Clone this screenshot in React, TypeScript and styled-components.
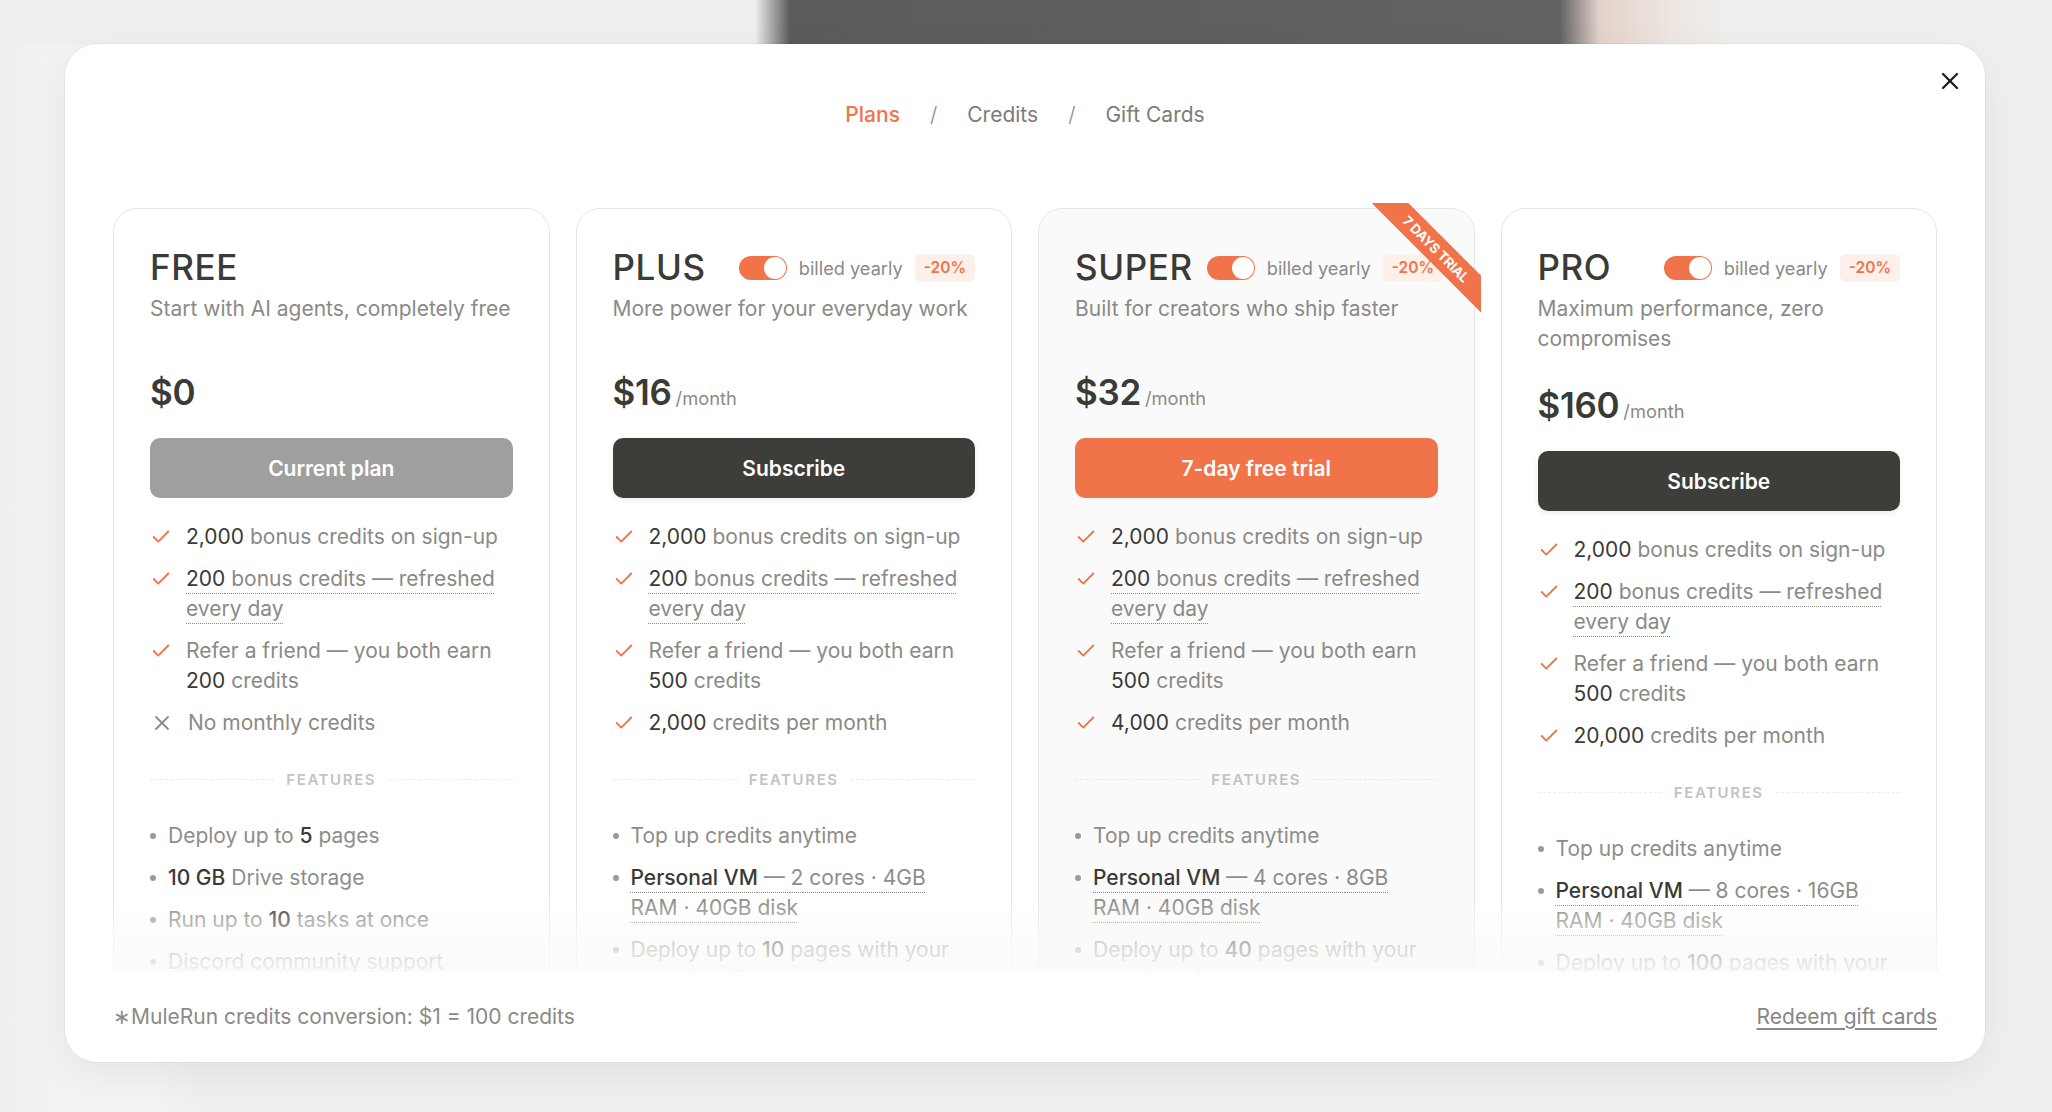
import React from 'react';
import styled, { createGlobalStyle, css } from 'styled-components';
import { Check, X } from 'lucide-react';

const ORANGE = '#f0734a';
const DARK = '#3a3a37';
const GRAY = '#8a8a87';

const GlobalStyle = createGlobalStyle`
  html, body { margin: 0; padding: 0; }
  body {
    width: 2052px;
    height: 1112px;
    overflow: hidden;
    font-family: Inter, "Noto Sans", "Liberation Sans", sans-serif;
    -webkit-font-smoothing: antialiased;
    background:
      linear-gradient(90deg, rgba(239,239,237,1) 0px, rgba(239,239,237,1) 755px, #5b5b5b 790px, #636363 1560px, #e4d3cb 1600px, #eee8e4 1680px, rgba(239,239,237,1) 1730px) 0 0 / 2052px 44px no-repeat,
      linear-gradient(90deg, #efefed 0px, #f3f3f1 70px, #f3f3f1 150px, #efefed 200px) 0 0 / 2052px 1112px no-repeat,
      #efefed;
  }
  * { box-sizing: border-box; }
`;

const Page = styled.div`
  height: 1112px;
  padding: 44px 0 0 65px;
`;

const Modal = styled.div`
  position: relative;
  width: 1920px;
  height: 1018px;
  background: #ffffff;
  border-radius: 32px;
  box-shadow: 0 0 0 1px rgba(0, 0, 0, 0.035), 0 12px 40px rgba(0, 0, 0, 0.06);
  display: flex;
  flex-direction: column;
  padding: 56px 48px 30px;
`;

const CloseButton = styled.button`
  position: absolute;
  top: 23px;
  right: 21px;
  width: 28px;
  height: 28px;
  padding: 0;
  border: none;
  background: transparent;
  color: #1f1f1f;
  display: flex;
  align-items: center;
  justify-content: center;
  cursor: pointer;
`;

const Tabs = styled.nav`
  display: flex;
  justify-content: center;
  align-items: center;
  gap: 30px;
  height: 30px;
  font-size: 21px;
  line-height: 30px;
`;

const Tab = styled.span<{ $active?: boolean }>`
  color: ${(p) => (p.$active ? ORANGE : '#7c7c79')};
  font-weight: ${(p) => (p.$active ? 500 : 400)};
`;

const Slash = styled.span`
  color: #8d8d8a;
  font-weight: 300;
`;

const ScrollArea = styled.div`
  position: relative;
  margin-top: 70px;
  flex: 1;
  overflow: hidden;
  padding-top: 8px;
`;

const Fade = styled.div`
  position: absolute;
  left: 0;
  right: 0;
  bottom: 0;
  height: 72px;
  pointer-events: none;
  background: linear-gradient(to bottom, rgba(250, 250, 249, 0) 0%, rgba(250, 250, 249, 0.55) 45%, rgba(250, 250, 249, 0.9) 100%);
`;

const Grid = styled.div`
  display: grid;
  grid-template-columns: repeat(4, minmax(0, 1fr));
  gap: 26px;
  align-items: stretch;
`;

const Card = styled.section<{ $tinted?: boolean }>`
  position: relative;
  min-width: 0;
  border: 1px solid #e6e6e4;
  border-radius: 24px;
  background: ${(p) => (p.$tinted ? '#fafafa' : '#ffffff')};
  padding: 38px 36px 48px;
  display: flex;
  flex-direction: column;
`;

const RibbonClip = styled.div`
  position: absolute;
  top: -6px;
  right: -7px;
  width: 120px;
  height: 120px;
  overflow: hidden;
  pointer-events: none;
`;

const Ribbon = styled.div`
  position: absolute;
  left: -5px;
  top: 33px;
  width: 160px;
  height: 26px;
  transform: rotate(45deg);
  background: ${ORANGE};
  color: #ffffff;
  font-size: 13.5px;
  font-weight: 700;
  letter-spacing: -0.3px;
  line-height: 26px;
  text-align: center;
  text-transform: uppercase;
`;

const TitleRow = styled.div`
  display: flex;
  align-items: center;
  justify-content: space-between;
  gap: 14px;
  height: 41px;
`;

const PlanName = styled.h2`
  margin: 0;
  font-size: 35px;
  line-height: 41px;
  font-weight: 500;
  letter-spacing: 0.6px;
  color: ${DARK};
  white-space: nowrap;
`;

const Billing = styled.div`
  display: flex;
  align-items: center;
  gap: 12px;
  flex-shrink: 0;
`;

const Toggle = styled.span`
  position: relative;
  width: 48px;
  height: 24px;
  border-radius: 12px;
  background: ${ORANGE};
  display: flex;
  align-items: center;
  justify-content: flex-end;
  padding: 1px;
`;

const Knob = styled.span`
  width: 22px;
  height: 22px;
  border-radius: 50%;
  background: #ffffff;
`;

const BilledText = styled.span`
  font-size: 18.2px;
  color: ${GRAY};
  white-space: nowrap;
`;

const Badge = styled.span`
  height: 28px;
  padding: 0 9px;
  border-radius: 6px;
  background: #fdefe9;
  color: ${ORANGE};
  font-size: 15.5px;
  font-weight: 600;
  display: flex;
  align-items: center;
`;

const Description = styled.p`
  margin: 6px 0 0;
  min-height: 47px;
  font-size: 21px;
  line-height: 30px;
  color: ${GRAY};
`;

const PriceRow = styled.div`
  margin-top: 29px;
  display: flex;
  align-items: baseline;
  gap: 4px;
  height: 44px;
`;

const Price = styled.span`
  font-size: 35px;
  line-height: 44px;
  font-weight: 600;
  color: ${DARK};
  letter-spacing: -0.3px;
`;

const Per = styled.span`
  font-size: 18.3px;
  color: ${GRAY};
`;

type Variant = 'muted' | 'dark' | 'accent';

const buttonColors: Record<Variant, string> = {
  muted: '#9f9f9e',
  dark: '#3d3d3a',
  accent: ORANGE,
};

const ActionButton = styled.button<{ $variant: Variant }>`
  margin-top: 24px;
  height: 60px;
  width: 100%;
  border: none;
  border-radius: 10px;
  background: ${(p) => buttonColors[p.$variant]};
  color: #ffffff;
  font-family: inherit;
  font-size: 21px;
  font-weight: 600;
  cursor: pointer;
  ${(p) =>
    p.$variant === 'dark' &&
    css`
      box-shadow: 0 2px 6px rgba(0, 0, 0, 0.08);
    `}
`;

const List = styled.ul<{ $pad?: number }>`
  list-style: none;
  margin: 0;
  padding: 0 ${(p) => p.$pad ?? 0}px 0 0;
  display: flex;
  flex-direction: column;
  gap: 12px;
`;

const CreditList = styled(List)`
  margin-top: 24px;
`;

const FeatureList = styled(List)`
  margin-top: 32px;
`;

const CreditItem = styled.li`
  display: flex;
  gap: 14px;
  font-size: 21px;
  line-height: 30px;
  color: ${GRAY};
`;

const IconBox = styled.span<{ $muted?: boolean }>`
  flex: 0 0 22px;
  height: 30px;
  display: flex;
  align-items: center;
  justify-content: center;
  color: ${(p) => (p.$muted ? '#8a8a87' : ORANGE)};
`;

const FeatureItem = styled.li`
  display: flex;
  gap: 12px;
  font-size: 21px;
  line-height: 30px;
  color: #8d8d8a;
`;

const Bullet = styled.span`
  flex: 0 0 6px;
  height: 30px;
  display: flex;
  align-items: center;
  &::before {
    content: '';
    width: 6px;
    height: 6px;
    border-radius: 50%;
    background: #9a9a97;
  }
`;

const Num = styled.span`
  color: ${DARK};
`;

const Strong = styled.span`
  color: ${DARK};
  font-weight: 500;
`;

const Dotted = styled.span`
  text-decoration: underline dotted #8a8a87;
  text-decoration-thickness: 1px;
  text-underline-offset: 7px;
`;

const Divider = styled.div`
  margin-top: 31px;
  height: 20px;
  display: flex;
  align-items: center;
  gap: 12px;
  &::before,
  &::after {
    content: '';
    flex: 1;
    border-top: 1px dashed #ebebe9;
  }
`;

const DividerLabel = styled.span`
  font-size: 15px;
  font-weight: 600;
  letter-spacing: 1.6px;
  color: #c3c3c1;
`;

const Footer = styled.footer`
  margin-top: 30px;
  height: 30px;
  display: flex;
  align-items: center;
  justify-content: space-between;
  font-size: 21px;
  line-height: 30px;
  color: ${GRAY};
`;

const RedeemLink = styled.a`
  color: #878784;
  text-decoration: underline;
  text-decoration-thickness: 1.5px;
  text-underline-offset: 4px;
  cursor: pointer;
`;

type Plan = {
  name: string;
  desc: string;
  price: string;
  per?: string;
  billing: boolean;
  ribbon?: string;
  tinted?: boolean;
  button: { label: string; variant: Variant };
  credits: { ok: boolean; content: React.ReactNode }[];
  features: React.ReactNode[];
};

const commonCredits = (refer: string, monthly: string | null) => [
  { ok: true, content: <><Num>2,000</Num> bonus credits on sign-up</> },
  { ok: true, content: <Dotted><Num>200</Num> bonus credits — refreshed every day</Dotted> },
  { ok: true, content: <>Refer a friend — you both earn <Num>{refer}</Num> credits</> },
  monthly
    ? { ok: true, content: <><Num>{monthly}</Num> credits per month</> }
    : { ok: false, content: <>No monthly credits</> },
];

const paidFeatures = (cores: string, ram: string, pages: string, storage: string) => [
  <>Top up credits anytime</>,
  <Dotted><Strong>Personal VM</Strong> — {cores} cores · {ram} RAM · 40GB disk</Dotted>,
  <>Deploy up to <Strong>{pages}</Strong> pages with your own domain</>,
  <><Strong>{storage}</Strong> Drive storage</>,
  <>Priority support</>,
];

const plans: Plan[] = [
  {
    name: 'FREE',
    desc: 'Start with AI agents, completely free',
    price: '$0',
    billing: false,
    button: { label: 'Current plan', variant: 'muted' },
    credits: commonCredits('200', null),
    features: [
      <>Deploy up to <Strong>5</Strong> pages</>,
      <><Strong>10 GB</Strong> Drive storage</>,
      <>Run up to <Strong>10</Strong> tasks at once</>,
      <>Discord community support</>,
      <>Standard models</>,
    ],
  },
  {
    name: 'PLUS',
    desc: 'More power for your everyday work',
    price: '$16',
    per: '/month',
    billing: true,
    button: { label: 'Subscribe', variant: 'dark' },
    credits: commonCredits('500', '2,000'),
    features: paidFeatures('2', '4GB', '10', '50 GB'),
  },
  {
    name: 'SUPER',
    desc: 'Built for creators who ship faster',
    price: '$32',
    per: '/month',
    billing: true,
    ribbon: '7 days trial',
    tinted: true,
    button: { label: '7-day free trial', variant: 'accent' },
    credits: commonCredits('500', '4,000'),
    features: paidFeatures('4', '8GB', '40', '100 GB'),
  },
  {
    name: 'PRO',
    desc: 'Maximum performance, zero compromises',
    price: '$160',
    per: '/month',
    billing: true,
    button: { label: 'Subscribe', variant: 'dark' },
    credits: commonCredits('500', '20,000'),
    features: paidFeatures('8', '16GB', '100', '500 GB'),
  },
];

const PlanCard: React.FC<{ plan: Plan }> = ({ plan }) => (
  <Card $tinted={plan.tinted}>
    {plan.ribbon && (
      <RibbonClip>
        <Ribbon>{plan.ribbon}</Ribbon>
      </RibbonClip>
    )}
    <TitleRow>
      <PlanName>{plan.name}</PlanName>
      {plan.billing && (
        <Billing>
          <Toggle>
            <Knob />
          </Toggle>
          <BilledText>billed yearly</BilledText>
          <Badge>-20%</Badge>
        </Billing>
      )}
    </TitleRow>
    <Description>{plan.desc}</Description>
    <PriceRow>
      <Price>{plan.price}</Price>
      {plan.per && <Per>{plan.per}</Per>}
    </PriceRow>
    <ActionButton $variant={plan.button.variant}>{plan.button.label}</ActionButton>
    <CreditList $pad={0}>
      {plan.credits.map((c, i) => (
        <CreditItem key={i}>
          <IconBox $muted={!c.ok}>
            {c.ok ? <Check size={22} strokeWidth={2} /> : <X size={24} strokeWidth={1.8} />}
          </IconBox>
          <span>{c.content}</span>
        </CreditItem>
      ))}
    </CreditList>
    <Divider>
      <DividerLabel>FEATURES</DividerLabel>
    </Divider>
    <FeatureList $pad={10}>
      {plan.features.map((f, i) => (
        <FeatureItem key={i}>
          <Bullet />
          <span>{f}</span>
        </FeatureItem>
      ))}
    </FeatureList>
  </Card>
);

export default function App() {
  return (
    <>
      <GlobalStyle />
      <Page>
        <Modal>
          <CloseButton aria-label="Close">
            <X size={28} strokeWidth={2} />
          </CloseButton>
          <Tabs>
            <Tab $active>Plans</Tab>
            <Slash>/</Slash>
            <Tab>Credits</Tab>
            <Slash>/</Slash>
            <Tab>Gift Cards</Tab>
          </Tabs>
          <ScrollArea>
            <Grid>
              {plans.map((p) => (
                <PlanCard key={p.name} plan={p} />
              ))}
            </Grid>
            <Fade />
          </ScrollArea>
          <Footer>
            <span>∗MuleRun credits conversion: $1 = 100 credits</span>
            <RedeemLink>Redeem gift cards</RedeemLink>
          </Footer>
        </Modal>
      </Page>
    </>
  );
}
